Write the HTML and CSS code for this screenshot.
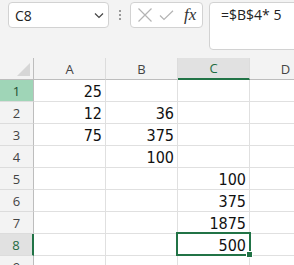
FILE: index.html
```html
<!DOCTYPE html>
<html>
<head>
<meta charset="utf-8">
<link rel="stylesheet" href="styles.css">
</head>
<body>
<div class="toolbar">
  <div class="namebox">
    <span class="ref">C8</span>
    <svg class="chev" width="10" height="7" viewBox="0 0 10 7"><polyline points="1,1.5 5,5.5 9,1.5" fill="none" stroke="#444" stroke-width="1.2"/></svg>
  </div>
  <div class="kebab">
    <span class="dot"></span><span class="dot"></span><span class="dot"></span>
  </div>
  <div class="btns">
    <svg class="ico-x" width="16" height="16" viewBox="0 0 16 16"><path d="M1.5 1.5 L14.5 14.5 M14.5 1.5 L1.5 14.5" stroke="#b4b4b4" stroke-width="1.2" fill="none"/></svg>
    <svg class="ico-ok" width="15" height="11" viewBox="0 0 15 11"><path d="M1 5.5 L5 9.5 L14 0.8" stroke="#b4b4b4" stroke-width="1.2" fill="none"/></svg>
    <span class="fx">fx</span>
  </div>
  <div class="formula">=$B$4* 5</div>
</div>
<div class="sheet">
  <div class="cell corner"><svg width="34" height="22" viewBox="0 0 34 22"><polygon points="30,5 30,18 17,18" fill="#d6d6d6"/></svg></div>
  <div class="cell colhead">A</div>
  <div class="cell colhead">B</div>
  <div class="cell colhead sel">C</div>
  <div class="cell colhead">D</div>

  <div class="cell rowhead hl">1</div>
  <div class="cell num">25</div><div class="cell"></div><div class="cell"></div><div class="cell"></div>

  <div class="cell rowhead">2</div>
  <div class="cell num">12</div><div class="cell num">36</div><div class="cell"></div><div class="cell"></div>

  <div class="cell rowhead">3</div>
  <div class="cell num">75</div><div class="cell num">375</div><div class="cell"></div><div class="cell"></div>

  <div class="cell rowhead">4</div>
  <div class="cell"></div><div class="cell num">100</div><div class="cell"></div><div class="cell"></div>

  <div class="cell rowhead">5</div>
  <div class="cell"></div><div class="cell"></div><div class="cell num">100</div><div class="cell"></div>

  <div class="cell rowhead">6</div>
  <div class="cell"></div><div class="cell"></div><div class="cell num">375</div><div class="cell"></div>

  <div class="cell rowhead">7</div>
  <div class="cell"></div><div class="cell"></div><div class="cell num">1875</div><div class="cell"></div>

  <div class="cell rowhead sel">8</div>
  <div class="cell"></div><div class="cell"></div><div class="cell num">500</div><div class="cell"></div>

  <div class="cell rowhead">9</div>
  <div class="cell"></div><div class="cell"></div><div class="cell"></div><div class="cell"></div>

  <div class="selection"></div>
  <div class="handle"></div>
</div>
</body>
</html>
```
FILE: styles.css
```css
html, body {
  margin: 0;
  padding: 0;
  overflow: hidden;
  background: #f3f3f3;
  width: 294px;
  height: 265px;
}

.toolbar {
  display: flex;
  align-items: flex-start;
  height: 58px;
  box-sizing: border-box;
  padding: 2px 0 0 8px;
  font-family: "Open Sans", "Noto Sans", sans-serif;
}

.namebox {
  width: 101px;
  height: 26px;
  box-sizing: border-box;
  background: #fff;
  border: 1px solid #d2d2d2;
  border-radius: 4px;
  display: flex;
  align-items: center;
  justify-content: space-between;
  padding: 0 4px 0 6px;
  flex: none;
}

.ref {
  font-size: 14px;
  color: #222;
}

.chev {
  display: block;
}

.kebab {
  width: 21px;
  height: 26px;
  display: flex;
  flex-direction: column;
  align-items: center;
  justify-content: center;
  gap: 2px;
  flex: none;
}

.dot {
  width: 2px;
  height: 2px;
  background: #9a9a9a;
  display: block;
}

.btns {
  width: 73px;
  height: 26px;
  box-sizing: border-box;
  background: #fff;
  border: 1px solid #d2d2d2;
  border-radius: 4px;
  display: flex;
  align-items: center;
  padding: 0 0 0 6px;
  margin-right: 6px;
  flex: none;
}

.ico-x { display: block; }
.ico-ok { display: block; margin-left: 6px; }

.fx {
  font-family: "Liberation Serif", serif;
  font-style: italic;
  font-size: 17px;
  color: #333;
  margin-left: 10px;
  line-height: 20px;
}

.formula {
  width: 110px;
  height: 48px;
  box-sizing: border-box;
  background: #fff;
  border: 1px solid #d2d2d2;
  border-radius: 4px;
  padding: 2px 0 0 11px;
  font-size: 14px;
  line-height: 20px;
  color: #222;
  flex: none;
}

.sheet {
  position: relative;
  display: grid;
  grid-template-columns: 34px 72px 72px 72px 72px;
  grid-auto-rows: 22px;
  width: 322px;
}

.cell {
  box-sizing: border-box;
  background: #fff;
  border-right: 1px solid #e0e0e0;
  border-bottom: 1px solid #e0e0e0;
}

.corner {
  background: #f3f3f3;
  border-right: 1px solid #bdbdbd;
  border-bottom: 1px solid #bdbdbd;
}

.corner svg { display: block; }

.colhead {
  background: #f3f3f3;
  border-bottom: 1px solid #bdbdbd;
  border-right: 1px solid #dcdcdc;
  font-family: "Open Sans", "Noto Sans", sans-serif;
  font-size: 13px;
  color: #444;
  display: flex;
  align-items: center;
  justify-content: center;
}

.colhead.sel {
  background: #e1e1e1;
  border-bottom: 2px solid #217346;
  color: #1d6b40;
}

.rowhead {
  background: #f3f3f3;
  border-right: 1px solid #bdbdbd;
  border-bottom: 1px solid #dcdcdc;
  font-family: "Open Sans", "Noto Sans", sans-serif;
  font-size: 13px;
  color: #444;
  display: flex;
  align-items: center;
  justify-content: center;
}

.rowhead.hl {
  background: #9fd5b7;
  color: #1e4d31;
}

.rowhead.sel {
  background: #e1e1e1;
  border-right: 2px solid #217346;
  color: #1d6b40;
}

.num {
  font-family: "Liberation Sans Narrow", "DejaVu Sans Condensed", "Liberation Sans", sans-serif;
  font-size: 16px;
  line-height: 18px;
  color: #111;
  display: flex;
  align-items: flex-end;
  justify-content: flex-end;
  padding-right: 3px;
}

.selection {
  position: absolute;
  left: 176px;
  top: 174px;
  width: 75px;
  height: 24px;
  box-sizing: border-box;
  border: 2px solid #217346;
}

.handle {
  position: absolute;
  left: 246px;
  top: 193px;
  width: 7px;
  height: 7px;
  box-sizing: border-box;
  background: #217346;
  border: 1px solid #fff;
}
```
